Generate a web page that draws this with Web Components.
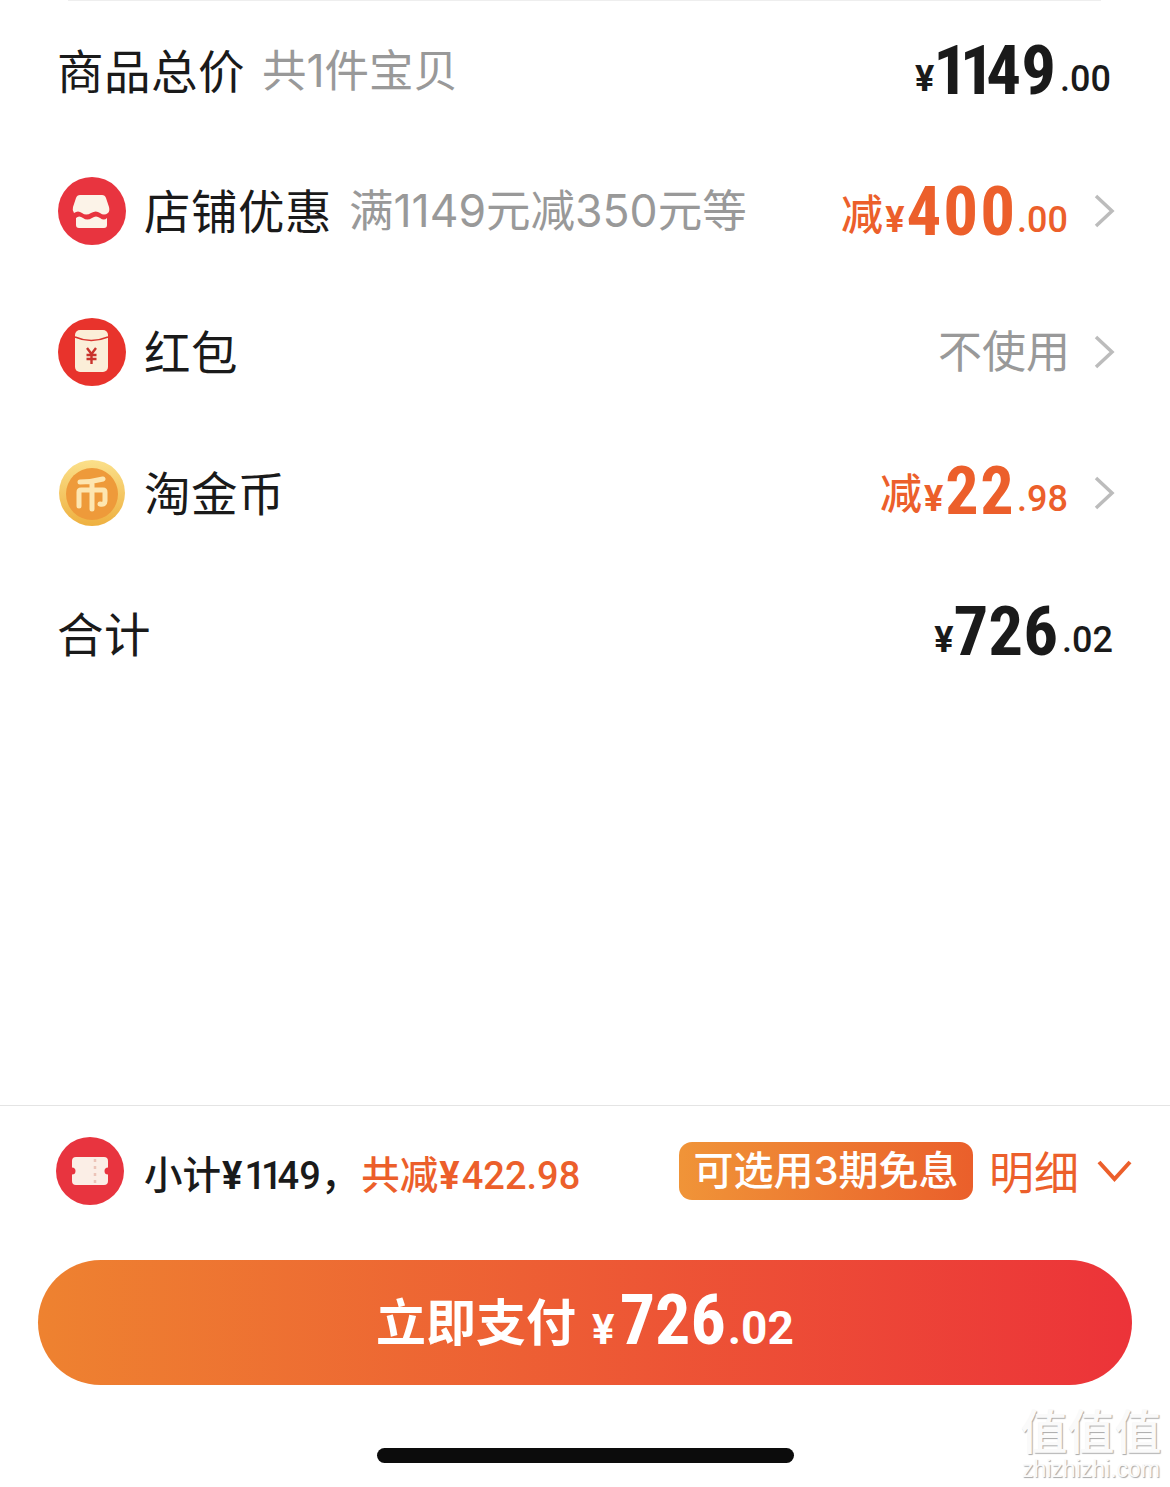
<!DOCTYPE html>
<html lang="zh">
<head>
<meta charset="utf-8">
<title>Order</title>
<style>
html, body { margin: 0; background: #fff; }
body { font-family: "Noto Sans CJK SC", "Noto Sans", sans-serif; color: #1a1a1a; }
</style>
</head>
<body>
<checkout-page>
  <order-row label="商品总价" note="共1件宝贝" first>
    <price-tag slot="value" int="1149" dec="00" size="69" track="0" gap="3"></price-tag>
  </order-row>
  <order-row label="店铺优惠" note="满1149元减350元等" arrow>
    <shop-icon slot="icon"></shop-icon>
    <price-tag slot="value" prefix="减" int="400" dec="00" size="69" track="2" join="0" tone="orange" style="padding-top:2px"></price-tag>
  </order-row>
  <order-row label="红包" arrow>
    <packet-icon slot="icon"></packet-icon>
    <span slot="value" style="font-size:44px;color:#999;line-height:1;padding-bottom:5px;margin-right:-2px">不使用</span>
  </order-row>
  <order-row label="淘金币" arrow>
    <coin-icon slot="icon"></coin-icon>
    <price-tag slot="value" prefix="减" int="22" dec="98" size="66" track="1.5" join="2" tone="orange" style="padding-bottom:2px"></price-tag>
  </order-row>
  <order-row label="合计">
    <price-tag slot="value" int="726" dec="02" size="69" track="0" gap="0" style="padding-bottom:4px;margin-right:-2px"></price-tag>
  </order-row>
</checkout-page>
<script>
const ORANGE = '#ec5f2b';

class PriceTag extends HTMLElement {
  connectedCallback() {
    const root = this.attachShadow({ mode: 'open' });
    const size = +this.getAttribute('size');
    const track = this.getAttribute('track') || 0;
    const gap = this.getAttribute('gap') || 2;
    const join = this.getAttribute('join') || 4;
    const color = this.getAttribute('tone') === 'orange' ? ORANGE : '#1a1a1a';
    const prefix = this.getAttribute('prefix');
    // the reference's 1 is much narrower than its other digits
    const digits = this.getAttribute('int').replace(/1+/g, '<span class="one">$&</span>');
    root.innerHTML = `
      <style>
        :host { display: inline-block; color: ${color}; font-family: Roboto, sans-serif; font-weight: 700; line-height: 1; white-space: nowrap; }
        .pre { font-family: "Noto Sans CJK SC", sans-serif; font-size: 42px; font-weight: 500; vertical-align: 5px; }
        .yen { font-family: "Liberation Sans Narrow", Roboto, sans-serif; font-size: 36px; margin: 0 ${gap}px 0 2px; vertical-align: 3px; }
        .int { font-size: ${size}px; font-stretch: 85%; letter-spacing: ${track}px; }
        .one { letter-spacing: -.12em; margin-left: -.06em; }
        .dec { font-size: 36px; font-weight: 500; font-stretch: 90%; margin-left: ${join}px; vertical-align: 3px; }
      </style>
      ${prefix ? `<span class="pre">${prefix}</span>` : ''}<span class="yen">¥</span><span class="int">${digits}</span><span class="dec">.${this.getAttribute('dec')}</span>`;
  }
}

class OrderRow extends HTMLElement {
  connectedCallback() {
    const root = this.attachShadow({ mode: 'open' });
    const note = this.getAttribute('note');
    const arrow = this.hasAttribute('arrow');
    const hasIcon = !!this.querySelector('[slot=icon]');
    root.innerHTML = `
      <style>
        :host { display: flex; align-items: center; box-sizing: border-box; height: 141px; padding: ${this.hasAttribute('first') ? 2 : 0}px ${arrow ? 55 : 59}px 0 ${hasIcon ? 58 : 57}px; font-size: 46.5px; }
        .label { color: #1a1a1a; line-height: 1; padding-bottom: 2px; letter-spacing: .5px; }
        ::slotted([slot=icon]) { margin-right: 18px; }
        .note { color: #999; font-family: Inter, "Noto Sans CJK SC", sans-serif; font-size: 44.5px; margin-left: 17px; line-height: 1; padding-top: 2px; white-space: nowrap; }
        .value { margin-left: auto; display: flex; align-items: center; }
        svg { margin-left: 26px; }
      </style>
      <slot name="icon"></slot>
      <span class="label">${this.getAttribute('label')}</span>
      ${note ? `<span class="note">${note}</span>` : ''}
      <span class="value"><slot name="value"></slot>
      ${arrow ? '<svg width="21" height="34" viewBox="0 0 21 34"><path d="M2 2 L18 17 L2 32" fill="none" stroke="#bcbcbc" stroke-width="3.5"/></svg>' : ''}</span>`;
  }
}

class RoundIcon extends HTMLElement {
  connectedCallback() {
    const root = this.attachShadow({ mode: 'open' });
    root.innerHTML = `
      <style>:host { display: block; width: 68px; height: 68px; flex: none; } svg { display: block; }</style>
      <svg width="68" height="68" viewBox="0 0 68 68">${this.art()}</svg>`;
  }
}
class ShopIcon extends RoundIcon {
  art() {
    return `<circle cx="34" cy="34" r="34" fill="#e8343f"/>
      <path d="M22 18 H44 Q47 18 48 21 L51 30 Q52 34 50 36 Q46 39 42 36 Q38 33 33 36 Q28 39 24 36 Q20 33 16 36 Q14 33 15 30 L18 21 Q19 18 22 18Z" fill="#fcf3e8"/>
      <path d="M18 41 Q21 38 25 41 Q29 44 34 41 Q38 38 42 41 Q46 44 49 41 V48 Q49 51 46 51 H21 Q18 51 18 48Z" fill="#fcf3e8"/>`;
  }
}
class PacketIcon extends RoundIcon {
  art() {
    return `<circle cx="34" cy="34" r="34" fill="#e8332c"/>
      <rect x="17" y="12" width="33" height="42" rx="5" fill="#fbeed8"/>
      <path d="M17 19 Q33 26 50 19" fill="none" stroke="#d9342e" stroke-width="1.4"/>
      <path d="M29 30 L33.5 36 L38 30 M28.5 37 H38.5 M28.5 41 H38.5 M33.5 36 V46" fill="none" stroke="#c9332c" stroke-width="2.4"/>`;
  }
}
class CoinIcon extends RoundIcon {
  art() {
    return `<defs><linearGradient id="rim" x1="0" y1="0" x2="0" y2="1"><stop offset="0" stop-color="#fbe08a"/><stop offset="1" stop-color="#eeb040"/></linearGradient></defs>
      <circle cx="34" cy="34" r="33" fill="url(#rim)"/>
      <circle cx="34" cy="35" r="26" fill="#ee9a3a"/>
      <path d="M22 23 Q34 23 45 20 M34 23 V50 M21 47 V33 Q21 31 23 31 H45 Q47 31 47 33 V42 Q47 46 42 45" fill="none" stroke="#fde6b0" stroke-width="5" stroke-linecap="round"/>`;
  }
}
class TicketIcon extends RoundIcon {
  art() {
    return `<circle cx="34" cy="34" r="34" fill="#e8343f"/>
      <path d="M20 20 H48 Q52 20 52 24 V30.5 A3.5 3.5 0 0 0 52 37.5 V44 Q52 48 48 48 H20 Q16 48 16 44 V37.5 A3.5 3.5 0 0 0 16 30.5 V24 Q16 20 20 20Z" fill="#fbeee6"/>
      <path d="M39 22 V46" stroke="#ecc4b8" stroke-width="2.5" stroke-dasharray="3 4"/>`;
  }
}

class SummaryBar extends HTMLElement {
  connectedCallback() {
    const root = this.attachShadow({ mode: 'open' });
    root.innerHTML = `
      <style>
        :host { display: flex; align-items: center; height: 132px; border-top: 1px solid #e4e4e4; padding: 0 38px 2px 56px; box-sizing: border-box; }
        ticket-icon { margin-right: 20px; }
        .sum, .cut { font-size: 38.5px; font-weight: 500; line-height: 1; white-space: nowrap; padding-top: 6px; }
        .sum { color: #1a1a1a; }
        .cut { color: ${ORANGE}; margin-left: 2px; }
        .yen { font-family: "Liberation Sans Narrow", Roboto, sans-serif; font-weight: 700; font-size: 38px; margin: 0 2px 0 1px; }
        .num { font-family: Roboto, sans-serif; font-weight: 500; font-size: 38px; }
        .ones { letter-spacing: -5px; }
        .badge { margin-left: auto; width: 294px; height: 58px; border-radius: 13px; background: linear-gradient(90deg, #f09438, #ea5f2b); color: #fff; font-family: Inter, "Noto Sans CJK SC", sans-serif; font-size: 40px; font-weight: 500; line-height: 58px; text-align: center; white-space: nowrap; }
        .more { font-size: 45px; color: ${ORANGE}; line-height: 1; margin-left: 16px; }
        svg { margin-left: 18px; }
      </style>
      <ticket-icon></ticket-icon>
      <span class="sum">小计<span class="yen">¥</span><span class="num"><span class="ones">11</span>49</span>，</span><span class="cut">共减<span class="yen">¥</span><span class="num">422.98</span></span>
      <span class="badge">可选用3期免息</span>
      <span class="more">明细</span>
      <svg width="35" height="24" viewBox="0 0 35 24"><path d="M2 3 L17.5 20 L33 3" fill="none" stroke="${ORANGE}" stroke-width="4"/></svg>`;
  }
}

class PayButton extends HTMLElement {
  connectedCallback() {
    const root = this.attachShadow({ mode: 'open' });
    root.innerHTML = `
      <style>
        :host { display: block; height: 125px; line-height: 119px; margin: 23px 38px 0; border-radius: 63px; background: linear-gradient(90deg, #ee8230, #ec3339); color: #fff; font-weight: 700; text-align: center; white-space: nowrap; }
        .t { font-size: 50px; font-family: "Noto Sans CJK SC", sans-serif; font-weight: 700; margin-right: 16px; vertical-align: 3px; }
        .y { font-family: "Liberation Sans Narrow", Roboto, sans-serif; font-size: 42px; margin-right: 5px; }
        .i { font-family: Roboto, sans-serif; font-size: 70px; font-stretch: 85%; }
        .d { font-family: Roboto, sans-serif; font-size: 46px; font-stretch: 90%; margin-left: 2px; }
      </style>
      <span class="t">立即支付</span><span class="y">¥</span><span class="i">726</span><span class="d">.02</span>`;
  }
}

class HomeBar extends HTMLElement {
  connectedCallback() {
    const root = this.attachShadow({ mode: 'open' });
    root.innerHTML = `
      <style>
        :host { display: flex; justify-content: center; padding-top: 63px; }
        i { display: block; width: 417px; height: 15px; border-radius: 8px; background: #0c0c0c; }
      </style><i></i>`;
  }
}

class WaterMark extends HTMLElement {
  connectedCallback() {
    const root = this.attachShadow({ mode: 'open' });
    root.innerHTML = `
      <style>
        :host { position: absolute; right: 8px; top: 1404px; width: 142px; text-align: center; color: #fafafa; text-shadow: 1px 1px 1px #a8a8a8; line-height: 1; pointer-events: none; }
        .big { font-size: 47px; line-height: 50px; white-space: nowrap; font-weight: 500; }
        .url { font-family: "Liberation Sans", sans-serif; font-size: 23px; line-height: 22px; margin-top: 4px; white-space: nowrap; }
      </style>
      <div class="big">值值值</div><div class="url">zhizhizhi.com</div>`;
  }
}

class CheckoutPage extends HTMLElement {
  connectedCallback() {
    const root = this.attachShadow({ mode: 'open' });
    root.innerHTML = `
      <style>
        :host { display: flex; flex-direction: column; position: relative; height: 1487px; overflow: hidden; }
        .rule { height: 1px; margin: 0 69px 0 68px; background: #eee; flex: none; }
        main { flex: none; height: 1106px; margin-top: -2px; }
      </style>
      <div class="rule"></div>
      <main><slot></slot></main>
      <summary-bar></summary-bar>
      <pay-button></pay-button>
      <home-bar></home-bar>
      <water-mark></water-mark>`;
  }
}

customElements.define('price-tag', PriceTag);
customElements.define('order-row', OrderRow);
customElements.define('shop-icon', ShopIcon);
customElements.define('packet-icon', PacketIcon);
customElements.define('coin-icon', CoinIcon);
customElements.define('ticket-icon', TicketIcon);
customElements.define('summary-bar', SummaryBar);
customElements.define('pay-button', PayButton);
customElements.define('home-bar', HomeBar);
customElements.define('water-mark', WaterMark);
customElements.define('checkout-page', CheckoutPage);
</script>
</body>
</html>
